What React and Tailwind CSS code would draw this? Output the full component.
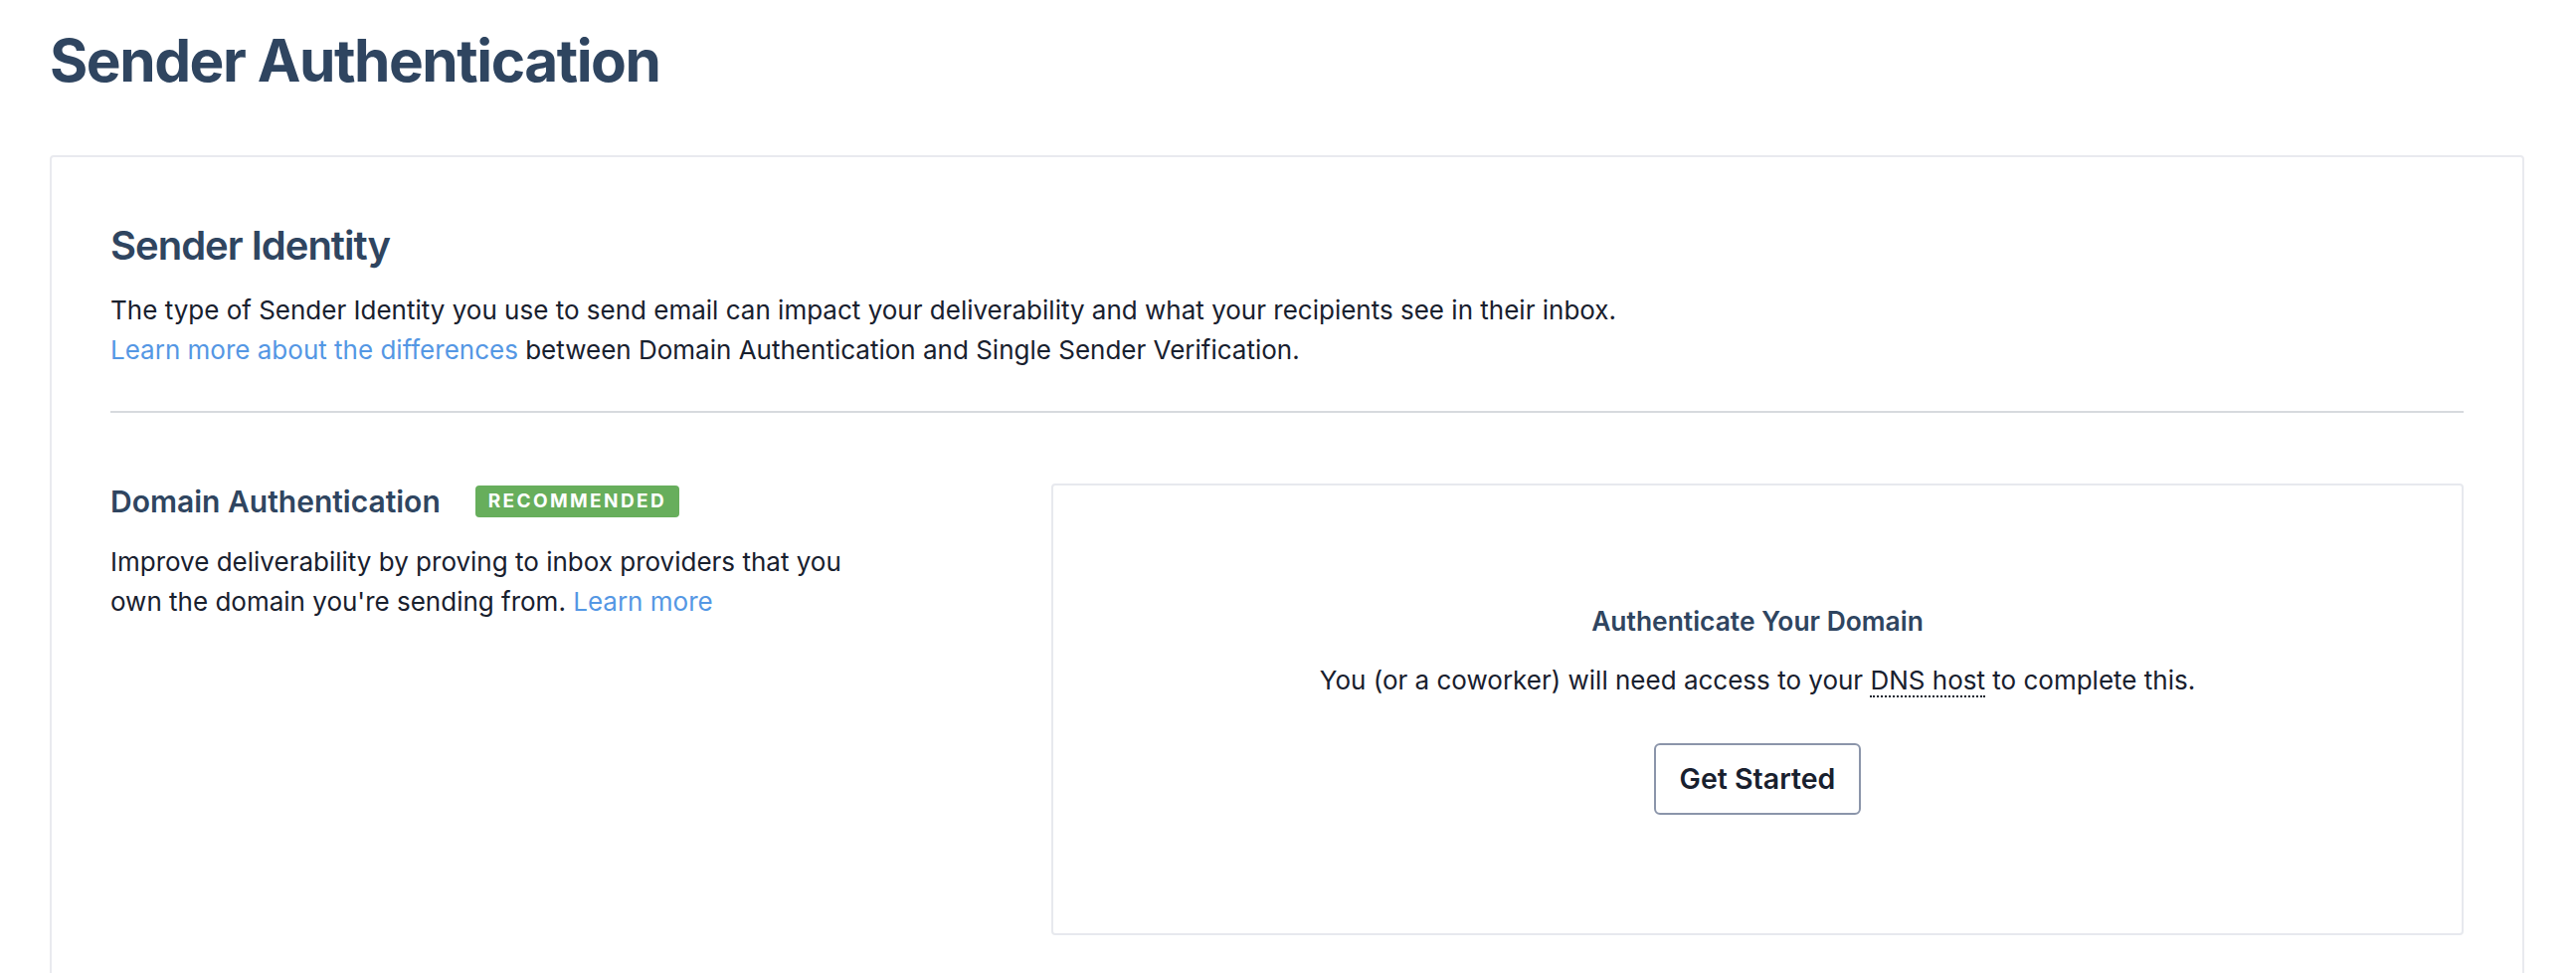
export default function App() {
  return (
    <div className="min-h-screen bg-white pl-[50px] pr-[52px] pt-[25px] font-['Inter',sans-serif] text-[#18202e]">
      <h1 className="text-[58.5px] font-bold leading-[72px] tracking-tight text-[#2f4560]">Sender Authentication</h1>

      <div className="mt-[59px] rounded-[4px] border-2 border-[#e9eaef] px-[59px] pb-[80px] pt-[65px]">
        <h2 className="text-[40px] font-semibold leading-[48px] tracking-tight text-[#2f4560]">Sender Identity</h2>
        <p className="mt-[21px] text-[26px] leading-[40px]">
          The type of Sender Identity you use to send email can impact your deliverability and what your recipients see in their inbox.
          <br />
          <a href="#" className="text-[#5497e4]">Learn more about the differences</a> between Domain Authentication and Single Sender Verification.
        </p>
        <hr className="mt-[41px] border-t-2 border-[#d7dade]" />

        <div className="mt-[71px] flex">
          <div className="w-[946px] shrink-0">
            <div className="flex items-center gap-[35px]">
              <h3 className="text-[30px] font-semibold leading-[36px] text-[#2f4560]">Domain Authentication</h3>
              <span className="flex h-[32px] items-center rounded-[4px] bg-[#67ae5c] px-[13px] text-[19px] font-bold tracking-[0.125em] text-white">
                RECOMMENDED
              </span>
            </div>
            <p className="mt-[23px] max-w-[760px] text-[26px] leading-[40px]">
              Improve deliverability by proving to inbox providers that you own the domain you're sending from.{' '}
              <a href="#" className="text-[#5497e4]">Learn more</a>
            </p>
          </div>

          <div className="flex flex-1 flex-col items-center rounded-[4px] border-2 border-[#e7e9ee] pb-[119px] pt-[116px] text-center">
            <h4 className="text-[26.4px] font-semibold leading-[40px] text-[#2f4560]">Authenticate Your Domain</h4>
            <p className="mt-[20px] text-[26px] leading-[40px]">
              You (or a coworker) will need access to your{' '}
              <span className="border-b-2 border-dotted border-[#18202e]">DNS host</span> to complete this.
            </p>
            <button
              type="button"
              className="mt-[43px] h-[72px] rounded-[6px] border-2 border-[#8b95aa] bg-white px-[24px] text-[28.5px] font-semibold text-[#18202e]"
            >
              Get Started
            </button>
          </div>
        </div>
      </div>
    </div>
  );
}
